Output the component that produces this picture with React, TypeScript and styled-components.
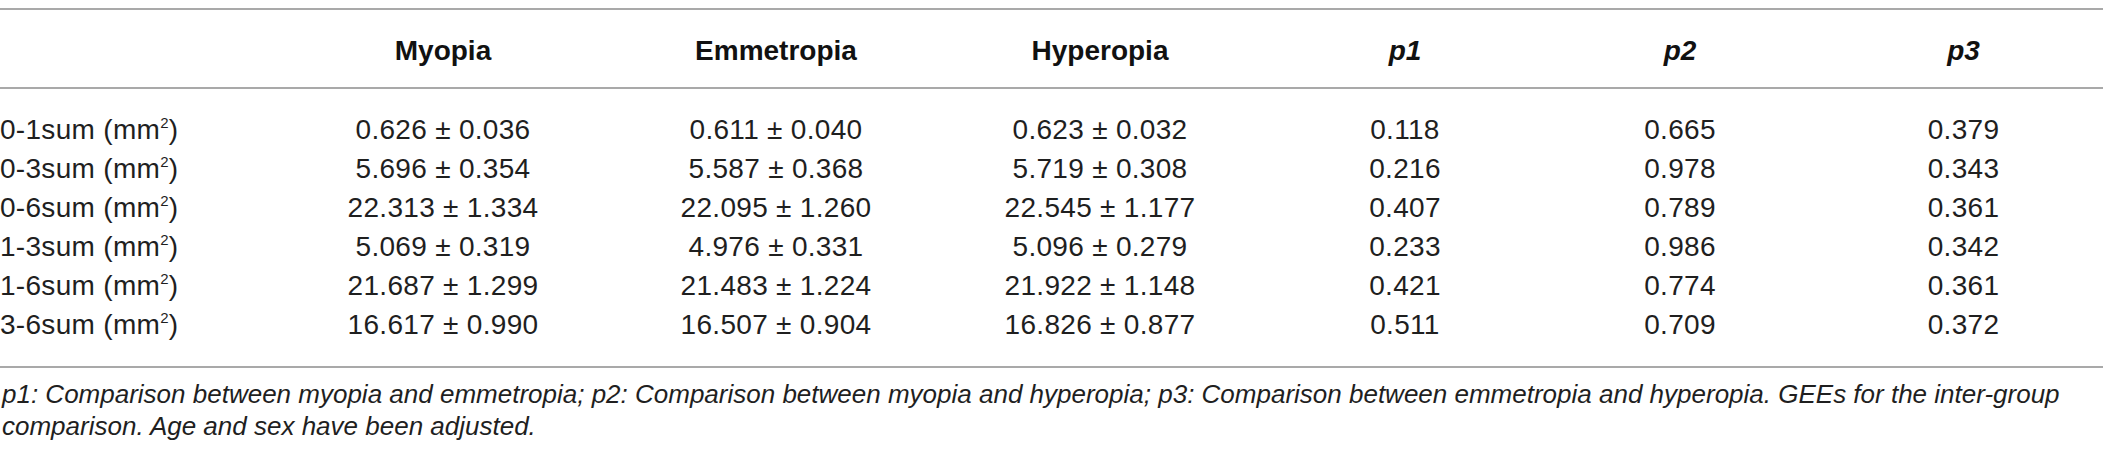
import styled, { createGlobalStyle } from 'styled-components'

type Row = {
  label: string
  myopia: string
  emmetropia: string
  hyperopia: string
  p1: string
  p2: string
  p3: string
}

const rows: Row[] = [
  { label: '0-1sum', myopia: '0.626 ± 0.036', emmetropia: '0.611 ± 0.040', hyperopia: '0.623 ± 0.032', p1: '0.118', p2: '0.665', p3: '0.379' },
  { label: '0-3sum', myopia: '5.696 ± 0.354', emmetropia: '5.587 ± 0.368', hyperopia: '5.719 ± 0.308', p1: '0.216', p2: '0.978', p3: '0.343' },
  { label: '0-6sum', myopia: '22.313 ± 1.334', emmetropia: '22.095 ± 1.260', hyperopia: '22.545 ± 1.177', p1: '0.407', p2: '0.789', p3: '0.361' },
  { label: '1-3sum', myopia: '5.069 ± 0.319', emmetropia: '4.976 ± 0.331', hyperopia: '5.096 ± 0.279', p1: '0.233', p2: '0.986', p3: '0.342' },
  { label: '1-6sum', myopia: '21.687 ± 1.299', emmetropia: '21.483 ± 1.224', hyperopia: '21.922 ± 1.148', p1: '0.421', p2: '0.774', p3: '0.361' },
  { label: '3-6sum', myopia: '16.617 ± 0.990', emmetropia: '16.507 ± 0.904', hyperopia: '16.826 ± 0.877', p1: '0.511', p2: '0.709', p3: '0.372' }
]

const App = () => {
  return (
    <>
      <GlobalStyle />
      <Page>
        <Table>
          {/* Header */}
          <HeaderRow>
            <HeaderCell />
            <HeaderCell>Myopia</HeaderCell>
            <HeaderCell>Emmetropia</HeaderCell>
            <HeaderCell>Hyperopia</HeaderCell>
            <HeaderCell $italic>p1</HeaderCell>
            <HeaderCell $italic>p2</HeaderCell>
            <HeaderCell $italic>p3</HeaderCell>
          </HeaderRow>

          {/* Body */}
          <Body>
            {rows.map((r) => (
              <BodyRow key={r.label}>
                <LabelCell>
                  {r.label} (mm<Sup>2</Sup>)
                </LabelCell>
                <ValueCell>{r.myopia}</ValueCell>
                <ValueCell>{r.emmetropia}</ValueCell>
                <ValueCell>{r.hyperopia}</ValueCell>
                <ValueCell>{r.p1}</ValueCell>
                <ValueCell>{r.p2}</ValueCell>
                <ValueCell>{r.p3}</ValueCell>
              </BodyRow>
            ))}
          </Body>
        </Table>

        <Footnote>
          p1: Comparison between myopia and emmetropia; p2: Comparison between myopia and hyperopia; p3: Comparison
          between emmetropia and hyperopia. GEEs for the inter-group
          <br />
          comparison. Age and sex have been adjusted.
        </Footnote>
      </Page>
    </>
  )
}

const GlobalStyle = createGlobalStyle`
  html, body {
    margin: 0;
    padding: 0;
    background: #ffffff;
  }
  body {
    font-family: 'Liberation Sans', Arial, Helvetica, sans-serif;
    color: #1f1f1f;
  }
`

const COLUMNS = '260px 366px 300px 348px 262px 288px 1fr'
const RULE = '2px solid #a9a9a9'

const Page = styled.div`
  width: 2103px;
  padding-top: 8px;
`

const Table = styled.div`
  display: flex;
  flex-direction: column;
  border-top: ${RULE};
  border-bottom: ${RULE};
`

const HeaderRow = styled.div`
  display: grid;
  grid-template-columns: ${COLUMNS};
  align-items: center;
  height: 79px;
  padding-top: 4px;
  box-sizing: border-box;
  border-bottom: ${RULE};
`

const HeaderCell = styled.div<{ $italic?: boolean }>`
  text-align: center;
  font-size: 28px;
  font-weight: 700;
  font-style: ${(p) => (p.$italic ? 'italic' : 'normal')};
  color: #111;
`

const Body = styled.div`
  display: flex;
  flex-direction: column;
  padding: 21px 0 22px;
`

const BodyRow = styled.div`
  display: grid;
  grid-template-columns: ${COLUMNS};
  align-items: center;
  height: 39px;
  font-size: 28px;
  letter-spacing: 0.3px;
`

const LabelCell = styled.div`
  text-align: left;
  white-space: nowrap;
`

const ValueCell = styled.div`
  text-align: center;
  white-space: nowrap;
`

const Sup = styled.sup`
  font-size: 15px;
  vertical-align: 11px;
  line-height: 0;
`

const Footnote = styled.p`
  margin: 0;
  padding: 10px 0 0 2px;
  font-size: 26px;
  font-style: italic;
  line-height: 32px;
  color: #1f1f1f;
  white-space: nowrap;
`

export default App
